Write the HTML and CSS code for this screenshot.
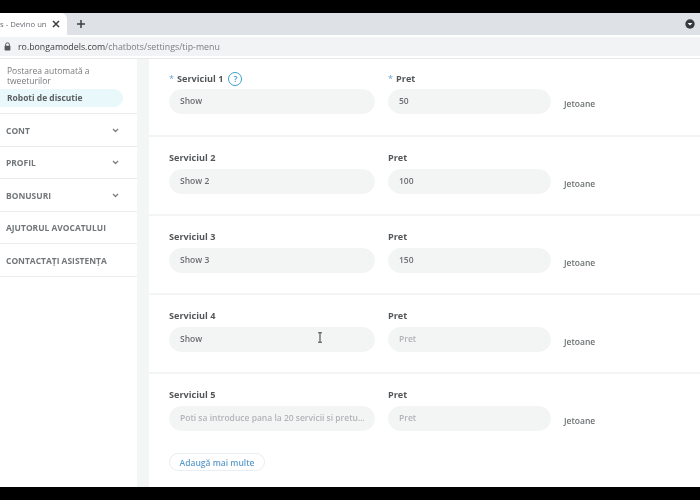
FILE: index.html
```html
<!DOCTYPE html>
<html lang="ro">
<head>
<meta charset="utf-8">
<title>Tip menu</title>
<link rel="stylesheet" href="styles.css">
</head>
<body>
<div class="screen">
  <div class="letterbox"></div>
  <div class="tabstrip">
    <div class="tab">
      <span class="tab-title">s - Devino un</span>
      <svg class="tab-close" width="8" height="8" viewBox="0 0 8 8"><path d="M1 1l6 6M7 1L1 7" stroke="#3c4043" stroke-width="1.5" fill="none"/></svg>
    </div>
    <svg class="tab-new" width="10" height="10" viewBox="0 0 10 10"><path d="M5 1v8M1 5h8" stroke="#3c4043" stroke-width="1.5" fill="none"/></svg>
    <svg class="tab-menu" width="10" height="10" viewBox="0 0 10 10"><circle cx="5" cy="5" r="4.7" fill="#36393d"/><path d="M2.6 3.9h4.8L5 6.6z" fill="#fff"/></svg>
  </div>
  <div class="addressbar">
    <div class="omnibox">
      <svg class="lock" width="7" height="9" viewBox="0 0 7 9"><path d="M1.6 4V2.7a1.9 1.9 0 0 1 3.8 0V4" stroke="#55585c" fill="none"/><rect x="0.6" y="3.8" width="5.8" height="4.6" rx="0.6" fill="#55585c"/></svg>
      <span class="url"><span class="url-host">ro.bongamodels.com</span>/chatbots/settings/tip-menu</span>
    </div>
  </div>
  <div class="page">
    <aside class="sidebar">
      <div class="subnav">
        <div class="subnav-link">Postarea automată a tweeturilor</div>
        <div class="subnav-active">Roboti de discutie</div>
      </div>
      <div class="nav-item"><span>CONT</span><svg width="7" height="5" viewBox="0 0 7 5"><path d="M1 1l2.5 2.5L6 1" stroke="#7a7e81" stroke-width="1.3" fill="none"/></svg></div>
      <div class="nav-item"><span>PROFIL</span><svg width="7" height="5" viewBox="0 0 7 5"><path d="M1 1l2.5 2.5L6 1" stroke="#7a7e81" stroke-width="1.3" fill="none"/></svg></div>
      <div class="nav-item"><span>BONUSURI</span><svg width="7" height="5" viewBox="0 0 7 5"><path d="M1 1l2.5 2.5L6 1" stroke="#7a7e81" stroke-width="1.3" fill="none"/></svg></div>
      <div class="nav-item"><span>AJUTORUL AVOCATULUI</span></div>
      <div class="nav-item"><span>CONTACTAȚI ASISTENȚA</span></div>
    </aside>
    <main class="main">
      <section class="row row-first">
        <div class="field field-name">
          <div class="label"><span class="req">*</span>Serviciul 1<span class="help">?</span></div>
          <div class="input">Show</div>
        </div>
        <div class="field field-price">
          <div class="label"><span class="req">*</span>Pret</div>
          <div class="input">50</div>
        </div>
        <div class="unit">Jetoane</div>
      </section>
      <section class="row">
        <div class="field field-name">
          <div class="label">Serviciul 2</div>
          <div class="input">Show 2</div>
        </div>
        <div class="field field-price">
          <div class="label">Pret</div>
          <div class="input">100</div>
        </div>
        <div class="unit">Jetoane</div>
      </section>
      <section class="row">
        <div class="field field-name">
          <div class="label">Serviciul 3</div>
          <div class="input">Show 3</div>
        </div>
        <div class="field field-price">
          <div class="label">Pret</div>
          <div class="input">150</div>
        </div>
        <div class="unit">Jetoane</div>
      </section>
      <section class="row">
        <div class="field field-name">
          <div class="label">Serviciul 4</div>
          <div class="input">Show</div>
        </div>
        <div class="field field-price">
          <div class="label">Pret</div>
          <div class="input input-empty">Pret</div>
        </div>
        <div class="unit">Jetoane</div>
      </section>
      <section class="row row-last">
        <div class="field field-name">
          <div class="label">Serviciul 5</div>
          <div class="input input-empty"><span class="clip">Poti sa introduce pana la 20 servicii si pretu...</span></div>
        </div>
        <div class="field field-price">
          <div class="label">Pret</div>
          <div class="input input-empty">Pret</div>
        </div>
        <div class="unit">Jetoane</div>
      </section>
      <div class="add-wrap"><button class="add-btn">Adaugă mai multe</button></div>
      <svg class="ibeam" width="6" height="11" viewBox="0 0 6 11"><path d="M1 .7h4M1 10.3h4M3 .7v9.6" stroke="#45484a" stroke-width="1.1" fill="none"/></svg>
    </main>
  </div>
  <div class="letterbox letterbox-bottom"></div>
</div>
</body>
</html>
```

FILE: styles.css
```css
* { box-sizing: border-box; }
html, body { margin: 0; padding: 0; }
body {
  width: 700px;
  height: 500px;
  overflow: hidden;
  background: #000;
  font-family: "Open Sans", "Liberation Sans", sans-serif;
}
.screen {
  width: 700px;
  height: 500px;
  display: flex;
  flex-direction: column;
  filter: blur(0.35px);
}
.letterbox { height: 13px; flex: none; background: #000; }
.letterbox-bottom { height: 13px; }

.tabstrip {
  height: 22px;
  flex: none;
  background: #dee1e6;
  display: flex;
  align-items: center;
  padding-right: 5px;
}
.tab {
  width: 67px;
  height: 22px;
  background: #fff;
  border-top-right-radius: 6px;
  display: flex;
  align-items: center;
  justify-content: space-between;
  padding-right: 7px;
  font-size: 7.7px;
  color: #6b6f74;
}
.tab-title { white-space: nowrap; }
.tab-new { margin-left: 9px; }
.tab-menu { margin-left: auto; }

.addressbar {
  height: 24px;
  flex: none;
  background: #fff;
  border-bottom: 1px solid #e6e8ea;
  padding: 2px 0;
}
.omnibox {
  height: 19px;
  background: #f1f3f4;
  display: flex;
  align-items: center;
  padding-left: 4px;
  gap: 7px;
}
.url { font-size: 8.8px; color: #7a7e83; white-space: nowrap; }
.url-host { color: #3a3d40; }

.page { flex: 1; min-height: 0; display: flex; background: #f4f5f5; }

.sidebar { width: 137px; flex: none; background: #fff; }
.subnav { height: 55px; padding-top: 7px; border-bottom: 1px solid #e9ebec; }
.subnav-link {
  padding-left: 7px;
  padding-right: 20px;
  font-size: 8.5px;
  line-height: 9.5px;
  color: #777b7e;
}
.subnav-active {
  width: 123px;
  height: 18px;
  margin-top: 4px;
  padding-left: 7px;
  background: #e9f8fb;
  border-radius: 0 9px 9px 0;
  font-size: 8.45px;
  font-weight: 700;
  line-height: 18px;
  color: #5c6063;
}
.nav-item {
  height: 32.5px;
  display: flex;
  align-items: center;
  justify-content: space-between;
  padding: 1px 18px 0 6px;
  border-bottom: 1px solid #e9ebec;
  font-size: 8.45px;
  font-weight: 700;
  color: #727679;
  white-space: nowrap;
}

.main {
  position: relative;
  flex: none;
  width: 551px;
  margin-left: 12px;
  background: #fff;
}
.row {
  height: 79px;
  display: flex;
  align-items: flex-start;
  padding: 15px 0 0 20px;
  border-bottom: 2px solid #f3f4f4;
}
.row-first { height: 78px; padding-top: 14px; }
.row-last { height: 78px; border-bottom: 0; }
.field-name { width: 206px; margin-right: 13px; }
.field-price { width: 163px; margin-right: 13px; }
.label {
  height: 12px;
  display: flex;
  align-items: center;
  font-size: 9.15px;
  font-weight: 700;
  line-height: 12px;
  color: #54575a;
}
.req { color: #6aa5d0; margin-right: 3px; font-weight: 400; }
.help {
  width: 14px;
  height: 14px;
  margin-left: 5px;
  border: 1.6px solid #3f9fca;
  border-radius: 50%;
  font-size: 9px;
  font-weight: 600;
  line-height: 11px;
  text-align: center;
  color: #3f9fca;
}
.input {
  height: 25px;
  margin-top: 5px;
  padding: 0 11px;
  background: #f3f5f5;
  border-radius: 13px;
  font-size: 8.5px;
  font-weight: 600;
  line-height: 24px;
  color: #6a6e70;
  white-space: nowrap;
  overflow: hidden;
}
.row-first .input { margin-top: 4px; }
.input-empty { color: #b0b4b6; }
.clip { display: block; overflow: hidden; text-overflow: clip; }
.unit {
  margin-top: 26px;
  font-size: 8.5px;
  font-weight: 600;
  line-height: 12px;
  color: #6c7072;
}
.row-first .unit { margin-top: 25px; }

.add-wrap { display: flex; padding: 1px 0 0 20px; }
.add-btn {
  width: 96px;
  height: 18px;
  padding: 0;
  background: #fff;
  border: 1px solid #e8eef2;
  border-radius: 9px;
  font-family: inherit;
  font-size: 8.5px;
  font-weight: 600;
  color: #5d9ccb;
}
.ibeam { position: absolute; left: 168px; top: 273px; }
```
